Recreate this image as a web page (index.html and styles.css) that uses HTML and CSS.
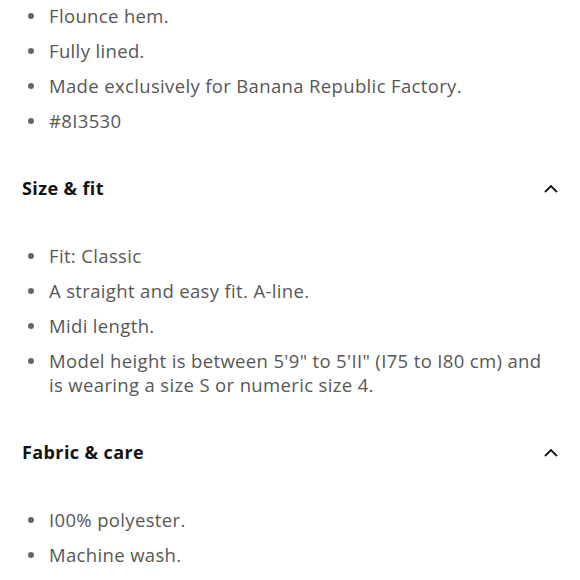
FILE: index.html
```html
<!DOCTYPE html>
<html>
<head>
<meta charset="utf-8">
<link rel="stylesheet" href="styles.css">
</head>
<body>
<div class="page">
  <ul class="list first">
    <li>Flounce hem.</li>
    <li>Fully lined.</li>
    <li>Made exclusively for Banana Republic Factory.</li>
    <li>#8I3530</li>
  </ul>
  <div class="head">
    <span class="title">Size &amp; fit</span>
    <svg class="chev" width="14" height="9" viewBox="0 0 14 9"><path d="M1 8 L7 2 L13 8" fill="none" stroke="#111" stroke-width="1.8"/></svg>
  </div>
  <ul class="list">
    <li>Fit: Classic</li>
    <li>A straight and easy fit. A-line.</li>
    <li>Midi length.</li>
    <li>Model height is between 5'9" to 5'II" (I75 to I80 cm) and is wearing a size S or numeric size 4.</li>
  </ul>
  <div class="head">
    <span class="title">Fabric &amp; care</span>
    <svg class="chev" width="14" height="9" viewBox="0 0 14 9"><path d="M1 8 L7 2 L13 8" fill="none" stroke="#111" stroke-width="1.8"/></svg>
  </div>
  <ul class="list">
    <li>I00% polyester.</li>
    <li>Machine wash.</li>
  </ul>
</div>
</body>
</html>
```
FILE: styles.css
```css
html, body { margin: 0; padding: 0; background: #fff; }
.page {
  padding: 4px 22px 0 22px;
  font-family: "Open Sans", Lato, sans-serif;
  font-variant-ligatures: none;
}
.list {
  list-style: none;
  margin: 0;
  padding: 0;
  display: flex;
  flex-direction: column;
  gap: 11px;
}
.list li {
  position: relative;
  padding-left: 27px;
  padding-right: 4px;
  font-size: 18.5px;
  letter-spacing: 0.35px;
  line-height: 24px;
  color: #575757;
}
.list li::before {
  content: "";
  position: absolute;
  left: 6px;
  top: 9px;
  width: 6px;
  height: 6px;
  border-radius: 50%;
  background: #666;
}
.head {
  display: flex;
  justify-content: space-between;
  align-items: center;
  padding: 43px 0 44px 0;
  height: 24px;
  box-sizing: content-box;
}
.title {
  font-size: 18px;
  font-weight: 700;
  letter-spacing: 0.4px;
  color: #111;
  line-height: 24px;
}
.chev { margin-right: 0; }
```
